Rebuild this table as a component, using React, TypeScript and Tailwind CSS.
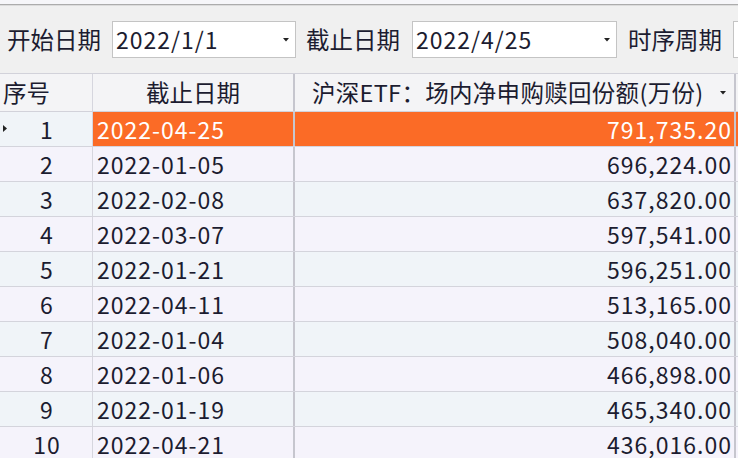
import React from "react";

const rows: [string, string, string][] = [
  ["1", "2022-04-25", "791,735.20"],
  ["2", "2022-01-05", "696,224.00"],
  ["3", "2022-02-08", "637,820.00"],
  ["4", "2022-03-07", "597,541.00"],
  ["5", "2022-01-21", "596,251.00"],
  ["6", "2022-04-11", "513,165.00"],
  ["7", "2022-01-04", "508,040.00"],
  ["8", "2022-01-06", "466,898.00"],
  ["9", "2022-01-19", "465,340.00"],
  ["10", "2022-04-21", "436,016.00"],
];

function DownTri() {
  return (
    <svg width="6" height="4" viewBox="0 0 6 4" className="shrink-0">
      <path d="M0 0 L6 0 L3 3.5 Z" fill="#222" />
    </svg>
  );
}

function Combo({ value, w }: { value: string; w: string }) {
  return (
    <div
      className={`${w} h-[37px] shrink-0 bg-white border border-[#c4c4c4] flex items-center pl-[3px] pr-[6px]`}
    >
      <span className="flex-1 text-[23px] tracking-[1px] leading-none text-[#1c1c30]">{value}</span>
      <DownTri />
    </div>
  );
}

export default function App() {
  return (
    <div
      className="w-[738px] h-[458px] overflow-hidden bg-[#f0f0f0] text-[#1c1c30]"
      style={{ fontFamily: '"Noto Sans CJK SC", "Noto Sans", sans-serif' }}
    >
      <div className="h-[4px] bg-[#f6f6f9]" />
      <div className="h-[1px] bg-[#acacac]" />
      <div className="h-[1px] bg-[#dcdcdc]" />
      <div className="h-[67px] flex items-center pl-[7px] whitespace-nowrap">
        <span className="w-[94px] shrink-0 text-[23.5px] leading-none">开始日期</span>
        <div className="w-[11px] shrink-0" />
        <Combo value="2022/1/1" w="w-[184px]" />
        <div className="w-[10px] shrink-0" />
        <span className="w-[95px] shrink-0 text-[23.5px] leading-none">截止日期</span>
        <div className="w-[11px] shrink-0" />
        <Combo value="2022/4/25" w="w-[205px]" />
        <div className="w-[11px] shrink-0" />
        <span className="w-[95px] shrink-0 text-[23.5px] leading-none">时序周期</span>
        <div className="w-[10px] shrink-0" />
        <div className="w-[40px] h-[37px] shrink-0 bg-white border border-[#c4c4c4]" />
      </div>
      {/* header */}
      <div className="flex h-[39px] border-t border-b border-[#d2d2da] bg-[#f4f4f6] text-[23.5px] whitespace-nowrap">
        <div className="w-[93px] shrink-0 border-r border-[#d6d6de] flex items-center pl-[3px]">序号</div>
        <div className="w-[200px] shrink-0 flex items-center justify-center">截止日期</div>
        <div className="w-[2px] shrink-0 bg-[#c6c6ce]" />
        <div className="w-[439px] shrink-0 flex items-center pl-[17px] pr-[8px]">
          <span className="flex-1 tracking-[0.3px]">沪深ETF：场内净申购赎回份额(万份)</span>
          <DownTri />
        </div>
        <div className="w-[2px] shrink-0 bg-[#c6c6ce]" />
        <div className="flex-1" />
      </div>
      {rows.map((r, i) => {
        const sel = i === 0;
        const bg = i % 2 === 0 ? "bg-[#f0f4f8]" : "bg-[#f5f3fb]";
        const cellBg = sel ? "bg-[#fb6b26] text-white" : bg;
        return (
          <div
            key={i}
            className={`flex h-[35px] border-b border-[#d4d4dc] text-[23px] tracking-[1px] leading-none whitespace-nowrap ${bg}`}
          >
            <div className="w-[93px] shrink-0 border-r border-[#d6d6de] relative flex items-center justify-center">
              {sel && (
                <svg width="4" height="7" viewBox="0 0 4 7" className="absolute left-[3px] top-[13px]">
                  <path d="M0 0 L4 3.5 L0 7 Z" fill="#222" />
                </svg>
              )}
              <span className="pl-[2px]">{r[0]}</span>
            </div>
            <div className={`w-[200px] shrink-0 flex items-center pl-[4px] ${cellBg}`}>{r[1]}</div>
            <div className="w-[2px] shrink-0 bg-[#c6c6ce]" />
            <div className={`w-[439px] shrink-0 flex items-center justify-end pr-[2px] ${cellBg}`}>{r[2]}</div>
            <div className="w-[2px] shrink-0 bg-[#c6c6ce]" />
            <div className={`flex-1 ${sel ? "bg-[#fb6b26]" : ""}`} />
          </div>
        );
      })}
    </div>
  );
}
